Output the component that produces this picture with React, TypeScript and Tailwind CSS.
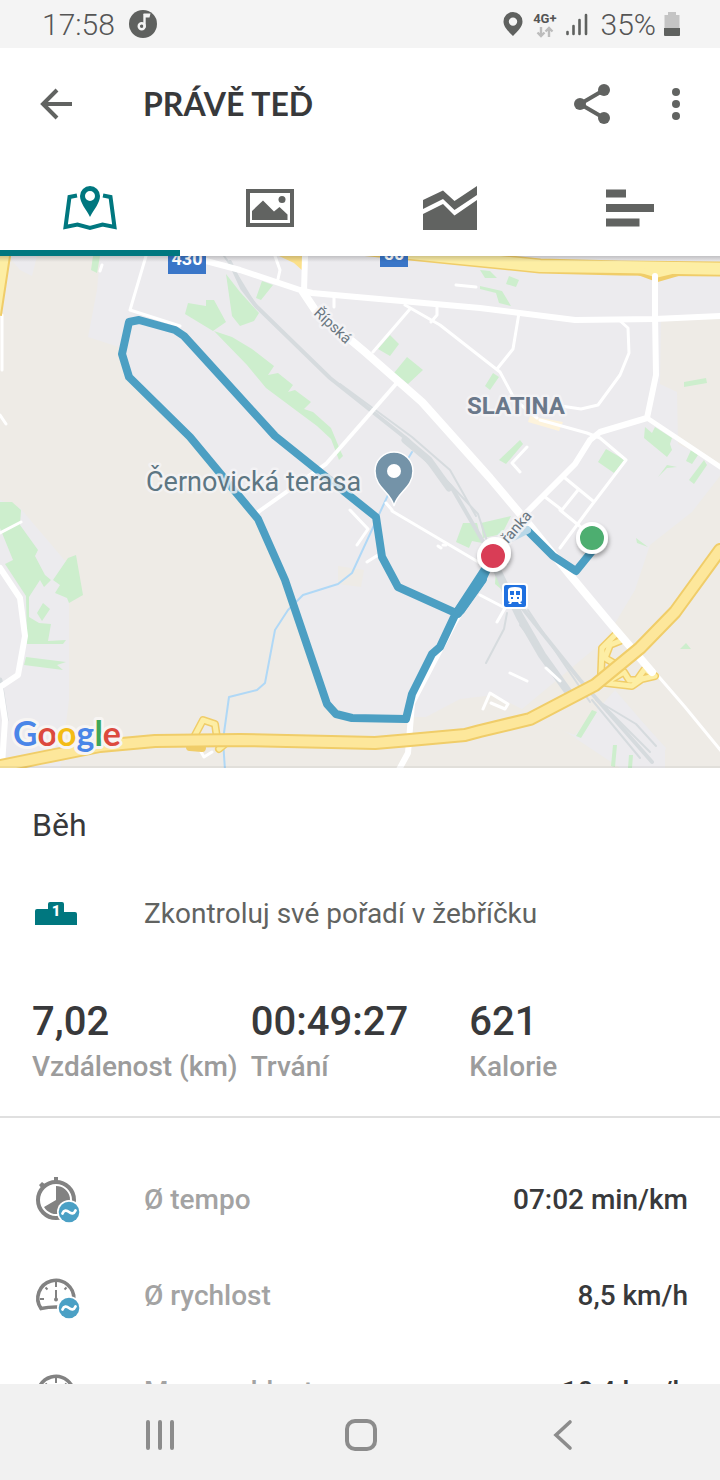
import { useState } from "react";

const tabs = [
  { id: "map", label: "Mapa", icon: <MapIcon /> },
  { id: "photos", label: "Fotky", icon: <PhotoIcon /> },
  { id: "charts", label: "Grafy", icon: <ChartIcon /> },
  { id: "splits", label: "Mezičasy", icon: <SplitsIcon /> },
];

const summary = [
  { label: "Vzdálenost (km)", value: "7,02" },
  { label: "Trvání", value: "00:49:27" },
  { label: "Kalorie", value: "621" },
];

const details = [
  { label: "Ø tempo", value: "07:02 min/km", icon: <StopwatchIcon /> },
  { label: "Ø rychlost", value: "8,5 km/h", icon: <GaugeIcon average /> },
  { label: "Max. rychlost", value: "10,4 km/h", icon: <GaugeIcon /> },
];

function StatusBar() {
  return (
    <div className="flex h-12 shrink-0 items-center justify-between bg-[#f4f4f4] pr-10 pl-[42px] text-[30px] text-[#555]">
      <div className="flex items-center gap-3.5">
        <span className="font-light">17:58</span>
        <svg className="size-7" viewBox="0 0 28 28">
          <circle cx="14" cy="14" r="14" fill="#5f615f" />
          <path d="M15.5 4v13.5" stroke="#f4f4f4" strokeWidth="2.4" />
          <path d="M14.5 3.5h7l-1 4h-5z" fill="#f4f4f4" />
          <circle cx="12.7" cy="16.3" r="3" fill="none" stroke="#f4f4f4" strokeWidth="2.4" />
        </svg>
      </div>
      <div className="flex items-center gap-2">
        <svg className="mr-0.5 h-6 w-5" viewBox="0 0 20 24">
          <path
            fillRule="evenodd"
            fill="#5f615f"
            d="M10 0a9.5 9.5 0 0 0-9.5 9.6C.5 15 5 19 10 24c5-5 9.5-9 9.5-14.4A9.5 9.5 0 0 0 10 0zm0 5.4a4.2 4.2 0 1 1 0 8.4 4.2 4.2 0 0 1 0-8.4z"
          />
        </svg>
        <div className="flex flex-col items-center pt-0.5">
          <span className="text-[13px] leading-3 font-bold">4G+</span>
          <svg className="mt-px h-3 w-5" viewBox="0 0 20 12" fill="none" stroke="#bcbcbc" strokeWidth="2.4">
            <path d="M6 1v9M2.5 6.5 6 10l3.5-3.5M14 11V2M10.5 5.5 14 2l3.5 3.5" />
          </svg>
        </div>
        <svg className="mr-1 h-6 w-6" viewBox="0 0 24 24" stroke="#5f615f" strokeWidth="2.6" strokeLinecap="round">
          <path d="M2.5 20v2M8.5 14v8M14.5 8v14M21 3v19" />
        </svg>
        <span className="font-light">35%</span>
        <svg className="h-6 w-4" viewBox="0 0 16 24">
          <path d="M4 0h8v3h3.5v13H.5V3H4z" fill="#c4c4c4" />
          <path d="M0 16h16v7a1 1 0 0 1-1 1H1a1 1 0 0 1-1-1z" fill="#5f615f" />
        </svg>
      </div>
    </div>
  );
}

function MapIcon() {
  return (
    <svg className="h-12 w-14" viewBox="0 0 56 48">
      <path
        d="M15 11.5 7.5 13 3.5 43l12-2.5L28 44l12.5-3.5 12 2.5-4-30L41 11.5"
        fill="none"
        stroke="#00777f"
        strokeWidth="4"
      />
      <path
        fillRule="evenodd"
        fill="#00777f"
        d="M28 2a10 10 0 0 0-10 10c0 7 6 13 10 21 4-8 10-14 10-21A10 10 0 0 0 28 2zm0 5a5 5 0 1 1 0 10 5 5 0 0 1 0-10z"
      />
    </svg>
  );
}

function PhotoIcon() {
  return (
    <svg className="h-10 w-12" viewBox="0 0 48 40">
      <rect x="2" y="3" width="44" height="34" fill="none" stroke="#616361" strokeWidth="4" />
      <path d="M6 32v-9l11-10.5L28 23.5l5.500-4.500 8 7.500V32z" fill="#616361" />
      <circle cx="36" cy="11.5" r="3.5" fill="#616361" />
    </svg>
  );
}

function ChartIcon() {
  return (
    <svg className="h-11 w-[54px]" viewBox="0 0 54 44" fill="#616361">
      <path d="M0 14 20 4.5l11.5 10.5L54 0v9L31.5 24 20 13 0 23z" />
      <path d="M0 28 20 18l11.5 11.5L54 14v30H0z" />
    </svg>
  );
}

function SplitsIcon() {
  return (
    <svg className="h-10 w-12" viewBox="0 0 48 40" fill="#616361">
      <path d="M0 1.5h20v8H0zM0 16h48v8H0zM0 30.5h33.500v8H0z" />
    </svg>
  );
}

function AverageBadge() {
  return (
    <g stroke="none">
      <circle cx="34" cy="36" r="12" fill="#fff" />
      <circle cx="34" cy="36" r="10.3" fill="#4ba0c5" />
      <path d="M27.5 37.5c1.500-3.500 4-3.500 6.500-1.500s5 2 6.500-1.500" fill="none" stroke="#fff" strokeWidth="2.8" strokeLinecap="round" />
    </g>
  );
}

function StopwatchIcon() {
  return (
    <svg className="size-12" viewBox="-3 0 48 48">
      <path d="M19 1h4v5h-4zM4 9l3-3 4 3-4 4z" fill="#828282" />
      <circle cx="21" cy="24" r="18" fill="none" stroke="#828282" strokeWidth="4" />
      <path d="M21 24V10a14 14 0 1 1-12 21z" fill="#828282" />
      <AverageBadge />
    </svg>
  );
}

function GaugeIcon({ average = false }: { average?: boolean }) {
  return (
    <svg className="size-12" viewBox="-3 0 48 48" fill="none" stroke="#828282">
      <path d="M38.8 27.5A18 18 0 1 0 6 36.5Q13 35 21 35t15 1.2a18 18 0 0 0 3-9" strokeWidth="3.6" />
      <path d="M21 10v5M10.5 15.5l2 2M31.5 15.5l-2 2M5 27h4M33 27h4M21 18v9" strokeWidth="2" />
      <circle cx="21" cy="27.5" r="2" fill="#828282" stroke="none" />
      {average && <AverageBadge />}
    </svg>
  );
}

function RouteMap() {
  return (
    <svg className="block w-full" viewBox="0 256 720 512" role="img" aria-label="Trasa běhu">
      <defs>
        <linearGradient id="topShadow" x1="0" y1="0" x2="0" y2="1">
          <stop offset="0" stopColor="#000" stopOpacity="0.18" />
          <stop offset="1" stopColor="#000" stopOpacity="0" />
        </linearGradient>
        <filter id="pinShadow" x="-40%" y="-40%" width="180%" height="180%">
          <feDropShadow dx="1" dy="3" stdDeviation="2" floodOpacity="0.35" />
        </filter>
      </defs>

      {/* land */}
      <rect y="256" width="720" height="512" fill="#ecebee" />
      <g fill="#eeebe6">
        <path d="M8 256 20 270l12 6 5-20h63l-3 34-9 47 34 11 6 28 62 60 68 83 27 62 42 120 25 16h74l34-18 34-4 50 25 90 50H60l9-70V603l-2-40-47-55-20-8V280z" />
        <path d="M661 318h59v146l-42-20-1-52-17-8zM720 476v292h-55l0-20-50-58-40 45-60-20 90-75 30-50 15-45 42-33z" />
        <path d="M338 566l26 4-3 17-23-3z" />
      </g>
      <path d="m615 692-40 46 45 30h38l8-20z" fill="#ecebee" />
      <path d="m530 416 33 6-4 9-31-9z" fill="#fdf3dc" />

      {/* parks */}
      <g fill="#cdeecd">
        <path d="M0 502h12l9 8-1 15 18 25-3 6 10 19 6 5-7 7-4-7-11 17v20l10 6 12 1-3 17 18-1-3 4H27l-1-48-21-32 8-4-13-32z" />
        <path d="m53 580 15-22 8-3 7 40-14 8-2-5-12-5 5-8zM43 603l7 6-8 12-5-8zM26 657l40 5-9 3 6 5-39-5z" />
        <path d="M93 256h7l-3 17-6-3zM188 303l18 3v-6h8l12 22-13 9-28-17zM226 274l14 18 19 21-5 8-14 5-8-10zM262 281l11 4-12 15-5-2zM214 331l18 6 20 12 22 17-6 9 10-2 15 12-5 7 7-2 16 12-7 7 9 3 18 16 10 24 2 4-4 4-8-21-14-13-51-38-19-23z" />
        <path d="m390 335 9 9-9 12-12-7zM407 357l16 13-15 14-14-11zM480 286l22 5 9 15-12-3-3-10-16-4zM490 271l7 7h-12l-5-8zM509 276l10 4-3 7-10-3zM493 373l6 4-9 13-5-4zM520 440l3 4-17 20-7-4zM606 449l19 11-11 13-16-11zM645 427l7 6 3-6 17 11-2 6 2 6-5 7-23-19zM691 450l7 5-6 9-6-3zM704 460l3 5-13 19-5-4zM684 382l22-4 1 5-23 4zM667 465l10 2-10 1-9 9zM463 523h14l5 20-10-2-3 7-13-6zM481 523l30-7-9 18-19 4zM496 570l8 13-3 6-6-5zM636 538l12 9-11-4zM680 649l6-6 5 6zM592 710l5 2-16 26-5-2zM613 745h4l-2 22-4-1zM629 755h4l-1 13h-4z" />
      </g>

      <g fill="none" strokeLinecap="round" strokeLinejoin="round">
        {/* railway */}
        <g stroke="#d6dbde">
          <path d="M230 262l12 26 14 18 74 72 78 62 44 48 36 62 12 30 48 60 32 40 72 82" strokeWidth="4" />
          <path d="M224 256l10 14 22 36M340 384l72 53 38 33 26 46M404 438l44 44 30 32 14 42 12 40" strokeWidth="2" />
          <path d="M405 440l24 20 20 28" strokeWidth="7" />
          <path d="M497 570l23 47 22 38 30 42" strokeWidth="8" />
          <path d="M528 610l32 48 30 44M507 613l-3 16-18 34M520 625l18 23M596 700l40 24 20 22M600 702l50 50M592 700l48 58" strokeWidth="2" />
          <path d="M0 680l6 40" strokeWidth="5" />
        </g>

        {/* stream */}
        <path d="m412 452-18 30-42 91-14 11-35 11-15 15-13 20-10 53-8 7-28 7-6 43 2 30" stroke="#b0d8f6" strokeWidth="2" />

        {/* minor roads */}
        <g stroke="#fff" strokeWidth="3">
          <path d="M146 256l-16 54 50 16M102 265l-2 6M275 256l5 14-2 9M334 297v10M405 305l35 20 60 47 15 28 22 18M410 309l-37 43M437 307v8l-6 7M456 285l20 2" />
          <path d="M519 313l-6 36-16 20M618 319l10 9 1 25-9 22-22 30-17 4-20-3M540 420l47 13 13 5 26 22-38 50-28 38M565 478l28 23M545 497l17 13 16-20M527 447l-15 16 8 9" />
          <path d="M2 315v55M0 415l6 9M0 533l21-11M350 510l18 19-11 16M367 562l11-7M386 503l6 7M443 545h3M438 546l3 2M480 595l25 13-8 14M510 673l17 8M546 668l14 13M483 709l7-16 18 11-3 5-14-6M560 510l22 18" />
          <path d="m653 670 32 37 37 45M200 750l4 7 8-5" />
          <path d="M392 511l88 52" />
          <path d="m396 384-70 80-68 48" strokeWidth="4" />
        </g>

        {/* trunk roads, casing first */}
        <g stroke="#f0cd69">
          <path d="M360 248l90 9 90 9 80 2 110 1" strokeWidth="15" />
          <path d="M622 266l35 13 38-11" strokeWidth="6" />
          <path d="M194 737l9-17 12 4 2 14M190 747l12 1M219 749l6-5" strokeWidth="8" />
          <path d="M616 634l-14 14-1 26M620 641l-10 4-5 13 12 7M646 670l9 6-13 3-10 7-26-3M644 670l-7 10h-8l-5-8-14 8" strokeWidth="8" />
        </g>
        <path d="M0 256h10L1 315H0z" fill="#fdeea4" stroke="none" />
        <path d="M10 256 1 315" stroke="#f0cd69" strokeWidth="2" />
        <path d="M279 256h24v15l-9-8z" fill="#fbe08a" stroke="none" />
        <g stroke="#fdeea4">
          <path d="M360 248l90 9 90 9 80 1 110 2" strokeWidth="12" />
          <path d="M626 266l31 9 34-8" strokeWidth="5" />
          <path d="M194 737l9-17 12 4 2 14M219 749l6-5" strokeWidth="5" />
          <path d="M616 634l-14 14-1 26M620 641l-10 4-5 13 12 7M646 670l9 6-13 3-10 7-26-3M644 670l-7 10h-8l-5-8-14 8" strokeWidth="5" />
        </g>

        {/* main roads */}
        <g stroke="#fff" strokeWidth="6">
          <path d="M206 261l34 9 60 20 12 3 168 15 95 12 80-1 67-3" />
          <path d="M305 256l-1 36" />
          <path d="M655 276v38l1 61-9 43-47 14-10 8-15 24-48 48-27 35-46 76-42 80-4 50-13 24" />
          <path d="M647 418l75 50" strokeWidth="5" />
          <path d="M303 292l12 18 50 42 57 50 68 76 37 44 43 53 40 48 42 49" strokeWidth="8" />
          <path d="m0 568 20 30 5 38-7 39-18 12 5 33-3 45" />
        </g>

        {/* motorway passes over everything else */}
        <path d="m-4 767 44-9 60-12 55-5 85-1 135 3 35-3 55-5 15-4 50-12 65-34 45-37 35-36 45-62" stroke="#f0cd69" strokeWidth="14" />
        <path d="m-4 767 44-9 60-12 55-5 85-1 135 3 35-3 55-5 15-4 50-12 65-34 45-37 35-36 45-62" stroke="#fde79b" strokeWidth="10" />

        {/* recorded track */}
        <path d="M597 545l-21 26-23-15-26-26" stroke="#4c9fc3" strokeWidth="8" strokeLinecap="butt" />
        <path d="M527 530l-20 10-14 16" stroke="#b9d8e8" strokeWidth="8" />
        <path
          d="M493 556l-10 16-28 43-15 32-8 7-20 40-6 25-54-1-16-4-9-10-42-124-27-61-68-82-61-60-7-23 7-32 10-2 36 10 9 6 91 100 101 81 6 40 16 30 60 27 24-34 11-24"
          stroke="#4c9fc3"
          strokeWidth="8"
        />
        <path d="m482 579-22 31" stroke="#4c9fc3" strokeWidth="10" />
      </g>

      {/* road shields */}
      <rect x="168" y="250" width="38" height="24" fill="#3a76c8" />
      <rect x="380" y="250" width="28" height="17" fill="#3a76c8" />
      <g fill="#fff" fontSize="18" fontWeight="700" textAnchor="middle">
        <text x="187" y="265">430</text>
        <text x="394" y="260">50</text>
      </g>

      {/* labels */}
      <g stroke="#f5f4f6" strokeOpacity="0.8" strokeWidth="5" strokeLinejoin="round" paintOrder="stroke">
        <text x="146" y="491" fontSize="27" fill="#5d7683">Černovická terasa</text>
        <text x="467" y="414" fontSize="24" fontWeight="700" fill="#6a788a">SLATINA</text>
        <text x="0" y="0" fontSize="15" fill="#6b7882" transform="translate(313 314) rotate(43)">Řípská</text>
        <text x="0" y="0" fontSize="15" fill="#6b7882" transform="translate(508 544) rotate(-49)">řanka</text>
      </g>

      {/* place and station markers */}
      <path d="M394 506c-3-14-19-18-19-35a19 19 0 0 1 38 0c0 17-16 21-19 35z" fill="#7493a8" stroke="#fff" strokeWidth="1.5" />
      <circle cx="394" cy="471" r="7" fill="#fff" />
      <rect x="503" y="584" width="24" height="24" rx="3" fill="#1f70e0" stroke="#fff" strokeWidth="2" />
      <path
        fillRule="evenodd"
        fill="#fff"
        d="M508 590q0-3 7-3t7 3v10q0 2-2 2l2 2h-3l-1-2h-6l-1 2h-3l2-2q-2 0-2-2zm2 1v4h4v-4zm6 0v4h4v-4zm-5 6v2h2v-2zm6 0v2h2v-2z"
      />

      {/* start and finish */}
      <g stroke="#fff" strokeWidth="4" filter="url(#pinShadow)">
        <circle cx="495" cy="553" r="14" fill="#fff" />
        <circle cx="493" cy="556" r="14" fill="#d93c56" />
        <circle cx="592" cy="538" r="14" fill="#4dae70" />
      </g>

      <text
        x="13"
        y="746"
        fontSize="34"
        className="font-['Lato',sans-serif]"
        fontWeight="700"
        stroke="#f7f5f3"
        strokeWidth="6"
        strokeLinejoin="round"
        paintOrder="stroke"
      >
        <tspan fill="#4a86e8">G</tspan>
        <tspan fill="#dc4a3e">o</tspan>
        <tspan fill="#f3bc16">o</tspan>
        <tspan fill="#4a86e8">g</tspan>
        <tspan fill="#3fa757">l</tspan>
        <tspan fill="#dc4a3e">e</tspan>
      </text>

      <rect y="256" width="720" height="6" fill="url(#topShadow)" />
      <rect y="766" width="720" height="2" fill="#000" fillOpacity="0.05" />
    </svg>
  );
}

function NavigationBar() {
  return (
    <nav className="grid h-24 shrink-0 grid-cols-3 bg-[#f1f1f1] px-[60px] pt-[5px]">
      <button className="flex items-center justify-center" aria-label="Poslední aplikace">
        <svg className="size-9" viewBox="0 0 36 36" stroke="#8c8c8c" strokeWidth="4" strokeLinecap="round">
          <path d="M6 5v26M18 5v26M30 5v26" />
        </svg>
      </button>
      <button className="flex items-center justify-center" aria-label="Domů">
        <svg className="size-9" viewBox="0 0 36 36" fill="none" stroke="#8c8c8c" strokeWidth="4">
          <rect x="5" y="4" width="28" height="28" rx="8" />
        </svg>
      </button>
      <button className="flex items-center justify-center" aria-label="Zpět">
        <svg className="size-9" viewBox="0 0 36 36" fill="none" stroke="#8c8c8c" strokeWidth="3.6" strokeLinecap="round">
          <path d="M28 5 14 18l14 13" />
        </svg>
      </button>
    </nav>
  );
}

export default function App() {
  const [activeTab, setActiveTab] = useState("map");

  return (
    <div className="flex h-screen flex-col bg-white font-['Roboto',sans-serif] text-[#38393b]">
      <StatusBar />
      <header className="flex h-28 shrink-0 items-center pr-6 pl-9">
        <button className="flex size-10 items-center justify-center" aria-label="Zpět">
          <svg className="size-9" viewBox="0 0 36 36" fill="none" stroke="#616361" strokeWidth="4">
            <path d="M34 18H5M19 4 5 18l14 14" />
          </svg>
        </button>
        <h1 className="ml-[67px] flex-1 font-['Lato',sans-serif] text-[32px] font-bold">PRÁVĚ TEĎ</h1>
        <button className="flex size-10 items-center justify-center" aria-label="Sdílet">
          <svg className="size-10" viewBox="0 0 40 40" fill="#616361">
            <path d="M32 6 8 20l24 14" fill="none" stroke="#616361" strokeWidth="4" />
            <circle cx="32" cy="6" r="6" />
            <circle cx="8" cy="20" r="6" />
            <circle cx="32" cy="34" r="6" />
          </svg>
        </button>
        <button className="ml-11 flex size-10 items-center justify-center" aria-label="Další možnosti">
          <svg className="size-8" viewBox="0 0 32 32" fill="#616361">
            <circle cx="16" cy="4" r="4" />
            <circle cx="16" cy="16" r="4" />
            <circle cx="16" cy="28" r="4" />
          </svg>
        </button>
      </header>
      <div className="grid h-24 shrink-0 grid-cols-4" role="tablist">
        {tabs.map((tab) => (
          <button
            key={tab.id}
            role="tab"
            aria-label={tab.label}
            aria-selected={tab.id === activeTab}
            onClick={() => setActiveTab(tab.id)}
            className={`flex items-center justify-center border-y-[6px] border-t-transparent ${
              tab.id === activeTab ? "border-b-[#00777f]" : "border-b-transparent"
            }`}
          >
            {tab.icon}
          </button>
        ))}
      </div>

      <main className="min-h-0 flex-1 overflow-y-auto [scrollbar-width:none]">
        <RouteMap />
        <section className="border-b-2 border-[#e0e0e0] px-8 pt-[37px] pb-[31px]">
          <h2 className="text-[32px] leading-10">Běh</h2>
          <a href="#zebricek" className="mt-[45px] flex items-center text-[28px] leading-10 text-[#616361]">
            <svg className="mr-16 size-12" viewBox="0 0 48 48">
              <path
                d="M5 19h11v-5a2 2 0 0 1 2-2h12a2 2 0 0 1 2 2v8h11a2 2 0 0 1 2 2v11H3V21a2 2 0 0 1 2-2z"
                fill="#00777f"
              />
              <text x="24" y="26" fontSize="15" fontWeight="900" fill="#fff" textAnchor="middle">
                1
              </text>
            </svg>
            Zkontroluj své pořadí v žebříčku
          </a>
          <dl className="mt-15 grid grid-cols-3">
            {summary.map((item) => (
              <div key={item.label} className="flex flex-col-reverse gap-[3px]">
                <dt className="text-[28px] leading-9 font-medium whitespace-nowrap text-[#9c9c9c]">{item.label}</dt>
                <dd className="text-[40px] leading-12 font-medium">{item.value}</dd>
              </div>
            ))}
          </dl>
        </section>
        <dl className="px-8 pt-[34px]">
          {details.map((item) => (
            <div key={item.label} className="flex h-24 items-center text-[28px] font-medium">
              <div className="w-28">{item.icon}</div>
              <dt className="flex-1 text-[#a3a3a3]">{item.label}</dt>
              <dd>{item.value}</dd>
            </div>
          ))}
        </dl>
      </main>
      <NavigationBar />
    </div>
  );
}
